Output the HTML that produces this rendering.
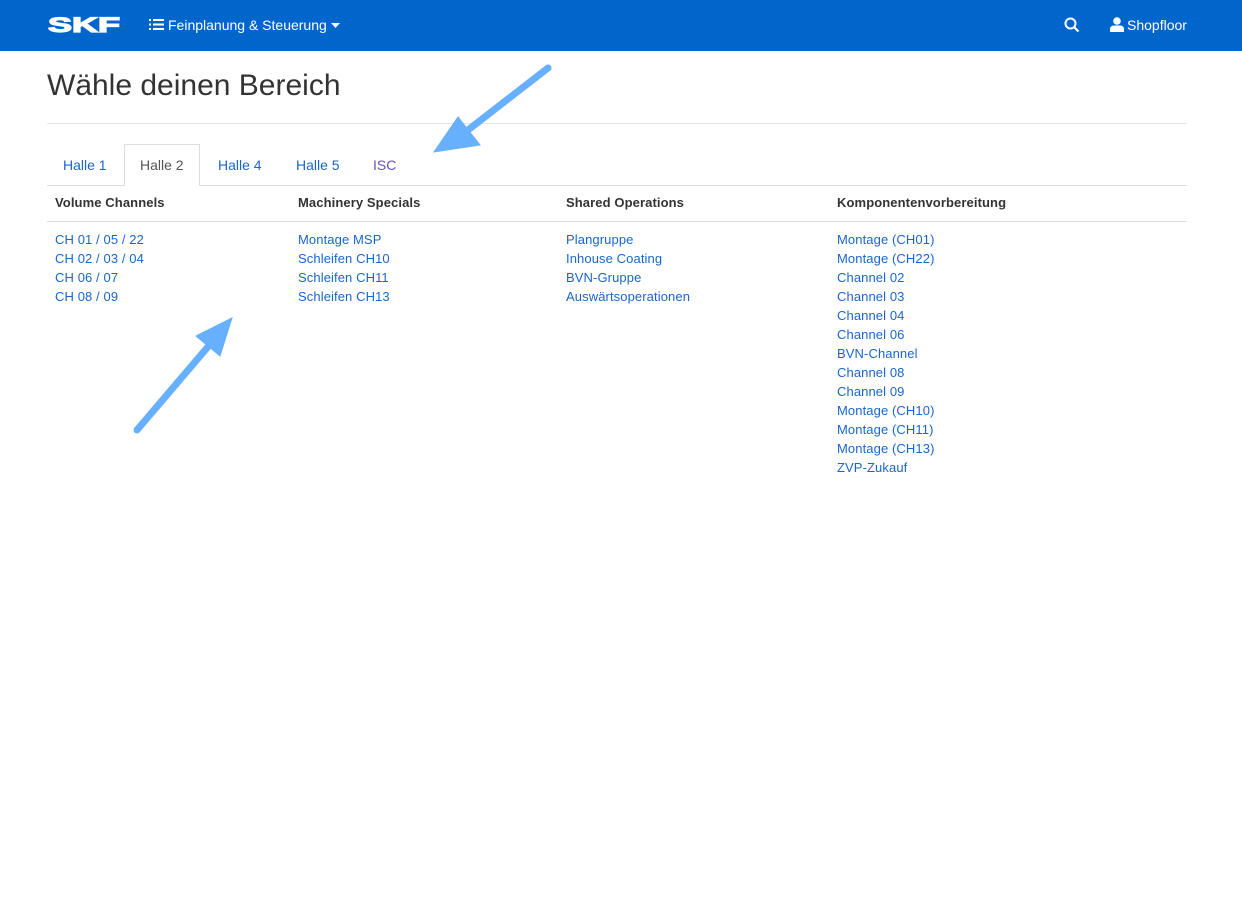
<!DOCTYPE html>
<html><head><meta charset="utf-8"><style>
*{margin:0;padding:0;box-sizing:border-box}
body{width:1242px;height:901px;background:#fff;font-family:"Liberation Sans",Arial,sans-serif;position:relative;overflow:hidden;color:#333}
.nav{position:absolute;left:0;top:0;width:1242px;height:51px;background:#0066cc;color:#fff;font-size:14px}
.nav span{position:absolute;top:17px}
h1{position:absolute;left:47px;top:69px;font-size:30px;font-weight:normal;color:#333}
.hr{position:absolute;left:47px;width:1140px;height:1px;background:#e5e5e5}
.tab{position:absolute;top:157px;font-size:14px;color:#1a66cc}
.act{position:absolute;left:124px;top:144px;width:76px;height:42px;border:1px solid #ddd;border-bottom:1px solid #fff;background:#fff}
.col{position:absolute;top:195px;font-size:13px}
.col b{display:block;height:35px;color:#333;letter-spacing:.1px}
.col a{display:block;color:#1a66cc;text-decoration:none;line-height:19px;letter-spacing:.1px}
</style></head><body>
<div class="nav">
<svg style="position:absolute;left:48px;top:16px" width="73" height="17" viewBox="0 0 73 17"><text x="0" y="16" font-family="Liberation Sans" font-weight="bold" font-size="21" fill="#fff" stroke="#fff" stroke-width="1.2" textLength="72" lengthAdjust="spacingAndGlyphs">SKF</text></svg>
<svg style="position:absolute;left:149px;top:18px" width="16" height="13" viewBox="0 0 16 13" fill="#fff"><rect x="0" y="1" width="2" height="2"/><rect x="0" y="5.5" width="2" height="2"/><rect x="0" y="10" width="2" height="2"/><rect x="4" y="1" width="11" height="2"/><rect x="4" y="5.5" width="11" height="2"/><rect x="4" y="10" width="11" height="2"/></svg>
<span style="left:168px">Feinplanung &amp; Steuerung</span>
<svg style="position:absolute;left:331px;top:23px" width="9" height="5"><path d="M0 0H9L4.5 5Z" fill="#fff"/></svg>
<svg style="position:absolute;left:1064px;top:17px" width="16" height="16" viewBox="0 0 16 16"><circle cx="6.5" cy="6.5" r="5" fill="none" stroke="#fff" stroke-width="2"/><path d="M10 10L14.5 14.5" stroke="#fff" stroke-width="2.2"/></svg>
<svg style="position:absolute;left:1110px;top:17px" width="14" height="15" viewBox="0 0 14 15" fill="#fff"><circle cx="7" cy="4" r="3.8"/><path d="M0 15V12.5Q0 8.5 4 8.5H10Q14 8.5 14 12.5V15Z"/></svg>
<span style="left:1127px">Shopfloor</span>
</div>
<h1>Wähle deinen Bereich</h1>
<div class="hr" style="top:123px"></div>
<div class="hr" style="top:185px;background:#ddd"></div>
<div class="act"></div>
<span class="tab" style="left:63px">Halle 1</span>
<span class="tab" style="left:140px;color:#555">Halle 2</span>
<span class="tab" style="left:218px">Halle 4</span>
<span class="tab" style="left:296px">Halle 5</span>
<span class="tab" style="left:373px;color:#6a4fc4">ISC</span>
<div class="hr" style="top:221px;background:#ddd"></div>
<div class="col" style="left:55px"><b>Volume Channels</b><a>CH 01 / 05 / 22</a><a>CH 02 / 03 / 04</a><a>CH 06 / 07</a><a>CH 08 / 09</a></div>
<div class="col" style="left:298px"><b>Machinery Specials</b><a>Montage MSP</a><a>Schleifen CH10</a><a>Schleifen CH11</a><a>Schleifen CH13</a></div>
<div class="col" style="left:566px"><b>Shared Operations</b><a>Plangruppe</a><a>Inhouse Coating</a><a>BVN-Gruppe</a><a>Auswärtsoperationen</a></div>
<div class="col" style="left:837px"><b>Komponentenvorbereitung</b><a>Montage (CH01)</a><a>Montage (CH22)</a><a>Channel 02</a><a>Channel 03</a><a>Channel 04</a><a>Channel 06</a><a>BVN-Channel</a><a>Channel 08</a><a>Channel 09</a><a>Montage (CH10)</a><a>Montage (CH11)</a><a>Montage (CH13)</a><a>ZVP-Zukauf</a></div>
<svg style="position:absolute;left:0;top:0" width="1242" height="901">
<g fill="#66b0ff" stroke="#66b0ff">
<path d="M548 68L468 130" stroke-width="7" stroke-linecap="round"/>
<path d="M434 152L458 117L480 145Z"/>
<path d="M137 430L212 342" stroke-width="7" stroke-linecap="round"/>
<path d="M232 318L196 336L220 356Z"/>
</g></svg>
</body></html>
